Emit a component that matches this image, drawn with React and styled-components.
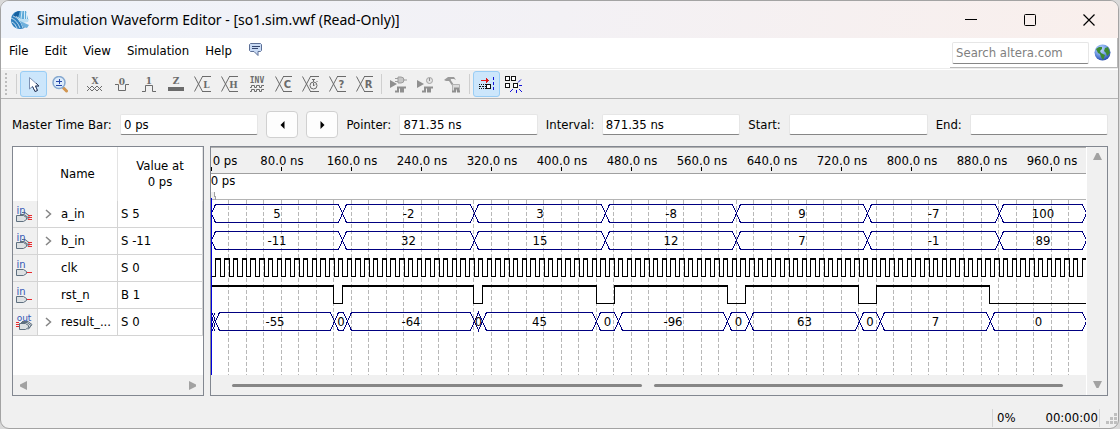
import React from 'react';
import styled, { createGlobalStyle, css } from 'styled-components';

const Global = createGlobalStyle`
  * { box-sizing: border-box; }
  body {
    margin: 0;
    background: #d9d9d9;
    color: #000;
    font: 13px/16px "DejaVu Sans Condensed", "Noto Sans", sans-serif;
  }
  button, input { font: inherit; color: inherit; }
`;

const Window = styled.div`
  display: flex;
  flex-direction: column;
  min-height: 100vh;
  margin-right: 1px;
  border: 1px solid #a3a3a3;
  border-radius: 9px;
  background: #f0f0f0;
  overflow: hidden;
`;

/* ---------- title bar ---------- */

const TitleBar = styled.header`
  display: flex;
  align-items: center;
  height: 37px;
  padding-left: 9px;
  background: linear-gradient(100deg, #eff3fa 0%, #f3f1f5 50%, #f9efec 100%);
`;

const Title = styled.h1`
  flex: 1;
  margin: 0 0 0 7px;
  font: 400 14px/20px "Noto Sans", "Open Sans", sans-serif;
  white-space: nowrap;
`;

const CaptionButton = styled.button`
  display: grid;
  place-items: center;
  width: 59px;
  height: 37px;
  padding: 0;
  border: 0;
  background: none;
`;

/* ---------- menu bar ---------- */

const MenuBar = styled.nav`
  display: flex;
  align-items: flex-start;
  height: 31px;
  border-bottom: 1px solid #ececec;
  background: #fff;
`;

const MenuItem = styled.button`
  height: 26px;
  padding: 0 8px;
  border: 0;
  background: none;
`;

const SearchBox = styled.form`
  display: flex;
  align-items: center;
  gap: 5px;
  height: 30px;
  margin-left: auto;
  padding: 0 6px 0 2px;
  border-right: 1px solid #b9b9b9;
  border-bottom: 1px solid #b9b9b9;
`;

const fieldLook = css`
  height: 21px;
  padding: 0 3px;
  border: 1px solid #e6e6e6;
  border-bottom-color: #868686;
  border-radius: 2px;
  background: #fff;
  outline: 0;
`;

const SearchInput = styled.input`
  ${fieldLook}
  width: 137px;
  height: 22px;
  &::placeholder { color: #7f7f7f; opacity: 1; }
`;

const IconButton = styled.button`
  display: grid;
  place-items: center;
  padding: 0;
  border: 0;
  background: none;
`;

/* ---------- tool bar ---------- */

const ToolBar = styled.div`
  display: flex;
  align-items: center;
  height: 30px;
  padding-left: 4px;
  border-top: 1px solid #fff;
  border-bottom: 1px solid #b4b4b4;
`;

const Grip = styled.span`
  width: 2px;
  height: 22px;
  margin-right: 6px;
  background: repeating-linear-gradient(#bdbdbd 0 2px, transparent 2px 4px);
`;

const Separator = styled.span`
  width: 1px;
  height: 20px;
  margin: 0 3px;
  background: #cfcfcf;
`;

const Tool = styled.button`
  display: grid;
  place-items: center;
  width: 27px;
  height: 26px;
  padding: 0;
  border: 1px solid ${p => (p.$on ? '#99cdf5' : 'transparent')};
  border-radius: 3px;
  background: ${p => (p.$on ? '#cce6fb' : 'none')};
`;

/* ---------- time bar ---------- */

const TimeBar = styled.div`
  display: flex;
  align-items: center;
  gap: 8px;
  padding: 12px 10px 8px 11px;
`;

const FieldLabel = styled.label`
  flex: none;
  width: ${p => p.$w}px;
  white-space: nowrap;
`;

const Field = styled.input`
  ${fieldLook}
  flex: 1 1 0;
  min-width: 0;
`;

const StepButton = styled.button`
  display: grid;
  place-items: center;
  width: 32px;
  height: 27px;
  padding: 0;
  border: 1px solid #d0d0d0;
  border-radius: 4px;
  background: #fdfdfd;
`;

/* ---------- panels ---------- */

const Panels = styled.main`
  display: flex;
  flex: 1;
  gap: 6px;
  padding: 0 10px 0 11px;
`;

const Panel = styled.section`
  display: flex;
  flex-direction: column;
  border: 1px solid #828790;
  background: #fff;
`;

const SignalPanel = styled(Panel)`
  flex: none;
  width: 192px;
`;

const ScopePanel = styled(Panel)`
  flex: 1;
  flex-direction: row;
  min-width: 0;
`;

const SignalTable = styled.table`
  width: 100%;
  border-collapse: separate;
  border-spacing: 0;
  table-layout: fixed;
`;

const HeadCell = styled.th`
  width: ${p => p.$w};
  height: 54px;
  padding: 0;
  border-right: 1px solid #e3e3e3;
  font-weight: 400;
`;

const Cell = styled.td`
  height: 27px;
  padding: 0 0 0 ${p => p.$pad || 3}px;
  border-right: 1px solid #d4d4d4;
  border-bottom: 1px solid #d4d4d4;
  background: ${p => (p.$icon ? '#f0f0f0' : '#fff')};
  white-space: nowrap;
  svg { display: block; }
`;

const NameLine = styled.span`
  display: flex;
  align-items: center;
  gap: 9px;
`;

const Chevron = styled.svg`
  width: 7px;
  height: 10px;
  flex: none;
`;

const TableScroll = styled.div`
  display: flex;
  align-items: center;
  justify-content: space-between;
  height: 20px;
  margin-top: auto;
  padding: 0 6px;
  background: #f0f0f0;
`;

const ScopeBody = styled.div`
  display: flex;
  flex: 1;
  flex-direction: column;
  min-width: 0;
`;

const Chart = styled.svg`
  display: block;
  flex: 1;
  width: 100%;
  min-height: 228px;
  text {
    font: 13px "DejaVu Sans Condensed", "Noto Sans", sans-serif;
    text-anchor: middle;
  }
`;

const ScopeScroll = styled.div`
  display: flex;
  flex: none;
  align-items: center;
  gap: 12px;
  height: 20px;
  padding: 0 23px 0 21px;
  background: #f0f0f0;
`;

const Track = styled.span`
  flex: 1;
  height: 3px;
  border-radius: 2px;
  background: #868686;
`;

const SideScroll = styled.div`
  display: flex;
  flex: none;
  flex-direction: column;
  align-items: center;
  justify-content: space-between;
  width: 21px;
  padding: 6px 0;
  border-left: 1px solid #fff;
  background: #f0f0f0;
`;

/* ---------- status bar ---------- */

const StatusBar = styled.footer`
  display: flex;
  align-items: center;
  justify-content: flex-end;
  height: 32px;
  padding: 12px 1px 0 0;
`;

const StatusText = styled.span`
  display: flex;
  align-items: center;
  justify-content: space-between;
  width: 108px;
  height: 18px;
  margin-right: 6px;
  padding: 0 1px 0 4px;
  border-left: 1px solid #d4d4d4;
  border-right: 1px solid #d4d4d4;
`;

/* ---------- icons ---------- */

const Icon = ({ w = 16, h = 16, children, ...rest }) => (
  <svg width={w} height={h} viewBox={`0 0 ${w} ${h}`} fill="none" aria-hidden="true" {...rest}>
    {children}
  </svg>
);

const INK = '#6b6b6b';

const Glyph = ({ x, y, size = 9, serif, weight = 700, children }) => (
  <text
    x={x}
    y={y}
    textAnchor="middle"
    fill={INK}
    fontSize={size}
    fontWeight={weight}
    fontFamily={serif ? '"DejaVu Serif", serif' : '"DejaVu Sans", sans-serif'}
  >
    {children}
  </text>
);

const ForkIcon = ({ glyph, serif, size = 10 }) => (
  <Icon w={17}>
    <path d="M0.500 0.500L8.500 15.500M0.500 15.500L8.500 0.500" stroke={INK} />
    <path d="M8 0.500H17M8 15.500H17" stroke={INK} />
    {glyph === 'clock' ? (
      <g stroke={INK}>
        <circle cx="11.500" cy="9.500" r="3.500" fill="#f0f0f0" />
        <path d="M11.500 7V10L13 8.500M11.500 3.500V6M10 3.500h3M14.500 5l1 1" />
      </g>
    ) : (
      <Glyph x={12.5} y={12} size={size} serif={serif}>{glyph}</Glyph>
    )}
  </Icon>
);

const AppLogo = () => (
  <Icon w={20} h={20}>
    <path d="M10 1C4 1 1 5 1 10s4 9 9 9c3 0 4-1 5-2L8 9l3-8z" fill="#2f7fbd" />
    <path d="M5 3Q7 1 10 1L8 8 3 7Z" fill="#155f9f" />
    <path d="M10 1h6l2 8-3 3H9L8 8z" fill="#5ea9d8" />
    <path d="M12 1l-1 8M14.500 1v8M16.500 3v6" stroke="#d5ebf8" />
    <path d="M1 8Q7 10 10 18M2 12Q5 13 7 18M3 6Q10 8 13 18M6 6.500Q12 9 15 16" stroke="#e4f2fb" strokeWidth="0.800" />
    <path d="M8 9h11l-1 3-6 1z" fill="#bcdff3" />
    <path d="M10 11l9 4-2 3-4-1z" fill="#6fb0dc" />
  </Icon>
);

const SpeechIcon = () => (
  <Icon w={15} h={15}>
    <path d="M2.500 1.500h10l1 1v6l-1 1h-2.500v4l-4-4h-3.500l-1-1v-6z" fill="#c9dbf5" stroke="#5c6f96" />
    <path d="M4 4.500h8M4 6.500h6" stroke="#34466f" />
  </Icon>
);

const GlobeIcon = () => (
  <Icon w={17} h={17}>
    <defs>
      <radialGradient id="sea" cx="0.4" cy="0.3" r="0.7">
        <stop offset="0" stopColor="#c2dafc" />
        <stop offset="0.5" stopColor="#7ba4ea" />
        <stop offset="1" stopColor="#2a4fb0" />
      </radialGradient>
    </defs>
    <circle cx="8.500" cy="8.500" r="8" fill="url(#sea)" />
    <path d="M2 5l3-2 3 0 0 2-2 2 1 2 2 1 2 1-1 3-1 2-2-3-1-3-2-1-1-2z" fill="#3c8a34" />
    <path d="M11 4l3-1 1 3 1 3-3 3-1-3-2-2z" fill="#3c8a34" />
  </Icon>
);

const PointerIcon = () => (
  <Icon w={12} h={17}>
    <path d="M1.500 1.500v11.500l3-2.500 2.500 5 2.500-1-2-4.500h3.500z" fill="#fff" stroke="#7d90b3" />
    <path d="M4.500 10.500l2.500 5 2.500-1-2-4.500h3.500L8 7" stroke="#2f3f5e" />
  </Icon>
);

const ZoomIcon = () => (
  <Icon w={17} h={17}>
    <path d="M11.500 12l3 3" stroke="#d2954f" strokeWidth="3" strokeLinecap="round" />
    <circle cx="7" cy="6.500" r="6" fill="#dcebfb" stroke="#86a9d0" strokeWidth="1.500" />
    <path d="M4 5.500h6M7.500 3v5M4 9.500h6" stroke="#2748a8" />
  </Icon>
);

const UnknownIcon = () => (
  <Icon h={18}>
    <Glyph x={8} y={9} serif>X</Glyph>
    <path d="M0 11l5 5M5 11l-5 5M5 11l5 5M10 11l-5 5M10 11l5 5M15 11l-5 5" stroke={INK} />
  </Icon>
);

const LowIcon = () => (
  <Icon h={18}>
    <Glyph x={8} y={10} serif>0</Glyph>
    <path d="M1 9.500h3.500v6h7v-6H15" stroke={INK} />
  </Icon>
);

const HighIcon = () => (
  <Icon h={18}>
    <Glyph x={8} y={9} serif>1</Glyph>
    <path d="M1 16.500h3.500v-6h7v6H15" stroke={INK} />
  </Icon>
);

const HighZIcon = () => (
  <Icon h={18}>
    <Glyph x={8} y={9} serif>Z</Glyph>
    <rect x="0" y="12" width="16" height="4" fill={INK} />
  </Icon>
);

const InvertIcon = () => (
  <Icon h={18}>
    <text x="8" y="8" textAnchor="middle" fill={INK} fontSize="8" fontWeight="700" fontFamily='"DejaVu Sans Mono", monospace'>INV</text>
    <path d="M1 12.500h1.500v-2h3v2h2v-2h3v2h2v-2h2.500M1 16.500h1.500v-2h3v2h2v-2h3v2h2v-2h2.500" stroke={INK} />
  </Icon>
);

const RunFunctionalIcon = () => (
  <Icon w={17} h={17}>
    <path d="M0 4l7 4-7 4z" fill="#8f8f8f" />
    <path d="M5 15.500h3v-4h3v4h2v-4h3" stroke="#8f8f8f" strokeWidth="2" />
    <path d="M8 1h3a3 3 0 0 1 0 6H8zM5 2.500h3M5 5.500h3M13 4h4" fill="#c6c6c6" stroke="#9d9d9d" />
  </Icon>
);

const RunTimingIcon = () => (
  <Icon w={17} h={17}>
    <path d="M0 4l7 4-7 4z" fill="#8f8f8f" />
    <path d="M5 15.500h3v-4h3v4h2v-4h3" stroke="#8f8f8f" strokeWidth="2" />
    <circle cx="12.500" cy="4.500" r="3" fill="#e2e2e2" stroke="#a3a3a3" />
    <path d="M12.500 2v3" stroke="#8f8f8f" />
  </Icon>
);

const TestBenchIcon = () => (
  <Icon w={17} h={17}>
    <path d="M0 4l4-3h6l2 3-2-1H7l-1 2H4L2 5z" fill="#9a9a9a" />
    <path d="M5.500 4l6 9" stroke="#9a9a9a" strokeWidth="2" />
    <path d="M8.500 15v-6.500h7v7" fill="#dcdcdc" stroke="#b3b3b3" />
    <path d="M8 15.500h3v-3h3v3h2" stroke="#8f8f8f" strokeWidth="2" />
  </Icon>
);

const SnapIcon = () => (
  <Icon w={16} h={16} shapeRendering="crispEdges">
    <path d="M2 4.500h8" stroke="#e01818" />
    <path d="M7.500 2v5M8.500 3v3" stroke="#e01818" />
    <path d="M0 8.500h7M0 12.500h7" stroke="#111" strokeDasharray="1 1" />
    <path d="M0 10.500h7" stroke="#111" strokeDasharray="2 1" />
    <rect x="7.500" y="8.500" width="4" height="4" fill="#fff" stroke="#111" />
    <path d="M14.500 1v14" stroke="#1212d8" strokeDasharray="3 2" />
  </Icon>
);

const GridIcon = () => (
  <Icon w={17} h={17}>
    <g stroke="#111" fill="#fff" shapeRendering="crispEdges">
      <rect x="0.500" y="0.500" width="4" height="4" />
      <rect x="6.500" y="0.500" width="4" height="4" />
      <rect x="0.500" y="7.500" width="4" height="4" />
      <rect x="8.500" y="7.500" width="4" height="4" />
    </g>
    <path d="M14 9.500h3M13 6.500l3-3M14 13l3 3M11.500 14v3M8 13l-3 3" stroke="#1212d8" />
  </Icon>
);

const WIRE = '#ea2a2e';
const EDGE = '#5f7080';

const PORT_SHAPES = {
  in: (
    <>
      <path d="M11 14.500h5" stroke={WIRE} />
      <path d="M0.500 11.500h7l3 2v2l-3 2h-7z" fill="#dde1e3" stroke={EDGE} />
    </>
  ),
  inBus: (
    <>
      <path d="M6 8.500h3l4 3v3" fill="#dde1e3" stroke={EDGE} />
      <path d="M4 10.500h4l4 3v2" fill="#dde1e3" stroke={EDGE} />
      <path d="M12 11.500h4M12 13.500h4M12 15.500h4" stroke={WIRE} />
      <path d="M0.500 11.500h7l3 2v2l-3 2h-7z" fill="#dde1e3" stroke={EDGE} />
    </>
  ),
  out: (
    <>
      <path d="M0 10.500h3M0 12.500h3M0 14.500h3" stroke={WIRE} />
      <path d="M6 9.500h6l4 3-3 4" fill="#dde1e3" stroke={EDGE} />
      <path d="M5 10.500h6l4 3-3 4" fill="#dde1e3" stroke={EDGE} />
      <path d="M3.500 11.500h6l3 2v2l-3 2h-6z" fill="#dde1e3" stroke={EDGE} />
    </>
  ),
};

const PortIcon = ({ kind }) => (
  <Icon w={17} h={20}>
    {PORT_SHAPES[kind]}
    <text
      x={kind === 'out' ? 8 : 5}
      y={kind === 'out' ? 9 : 10}
      textAnchor="middle"
      fill="#3457b5"
      fontSize={kind === 'out' ? 9 : 10}
      fontFamily='"DejaVu Sans", sans-serif'
    >
      {kind === 'out' ? 'out' : 'in'}
    </text>
  </Icon>
);

const Arrow = ({ dir }) => {
  const shapes = { left: 'M8 0v9L1 5.500v-2z', right: 'M0 0v9l7-3.500v-2z', up: 'M0 7h9L5.500 0h-2z', down: 'M0 0h9L5.500 7h-2z' };
  const tall = dir === 'left' || dir === 'right';
  return (
    <Icon w={tall ? 8 : 9} h={tall ? 9 : 8}>
      <path d={shapes[dir]} fill="#a2a2a2" />
    </Icon>
  );
};

const StepArrow = ({ back }) => (
  <Icon w={5} h={8}>
    <path d={back ? 'M4.500 0v8L0.500 4z' : 'M0.500 0v8l4-4z'} fill="#000" />
  </Icon>
);

/* ---------- data ---------- */

const SIGNALS = [
  { name: 'a_in', value: 'S 5', kind: 'inBus', group: true },
  { name: 'b_in', value: 'S -11', kind: 'inBus', group: true },
  { name: 'clk', value: 'S 0', kind: 'in' },
  { name: 'rst_n', value: 'B 1', kind: 'in' },
  { name: 'result_...', value: 'S 0', kind: 'out', group: true },
];

const END = 1000;
const PX_PER_NS = 0.875;
const at = ns => ns * PX_PER_NS;

const A_IN = [[0, '5'], [150, '-2'], [300, '3'], [450, '-8'], [600, '9'], [750, '-7'], [900, '100']];
const B_IN = [[0, '-11'], [150, '32'], [300, '15'], [450, '12'], [600, '7'], [750, '-1'], [900, '89']];
const RESULT = [
  [5, '-55'], [140, '0'], [155, '-64'], [300, '0'], [310, '45'], [440, '0'], [465, '-96'],
  [590, '0'], [615, '63'], [740, '0'], [765, '7'], [890, '0'],
];
const RESET_LOW = [[140, 150], [300, 310], [440, 460], [590, 610], [740, 760], [890, END]];

/* ---------- waveforms ---------- */

const Bus = ({ y, steps }) => (
  <g>
    {steps.map(([start, label], i) => {
      const end = i + 1 < steps.length ? steps[i + 1][0] : END;
      const a = Math.round(at(start)) + 0.5;
      const b = Math.round(at(end)) + 0.5;
      return (
        <g key={start}>
          <path
            d={`M${a + 4} ${y}H${b - 4}L${b} ${y + 9}L${b - 4} ${y + 18}H${a + 4}L${a} ${y + 9}Z`}
            fill="none"
            stroke="#000080"
            shapeRendering="crispEdges"
          />
          <text x={(a + b) / 2} y={y + 13.5}>{label}</text>
        </g>
      );
    })}
  </g>
);

const clockPath = y => {
  let d = `M0 ${y + 18}`;
  for (let t = 5; t < END; t += 10) {
    d += `H${Math.round(at(t)) + 0.5}V${y}H${Math.round(at(t + 5)) + 0.5}`;
    if (t + 5 < END) d += `V${y + 18}`;
  }
  return d;
};

const clockTops = y => {
  let d = '';
  for (let t = 5; t < END; t += 10) d += `M${Math.round(at(t))} ${y}H${Math.round(at(t + 5)) + 1}`;
  return d;
};

const resetPath = y => {
  let d = `M0 ${y}`;
  RESET_LOW.forEach(([down, up]) => {
    d += `H${Math.floor(at(down)) + 0.5}V${y + 18}H${Math.round(at(up)) + 0.5}`;
    if (up < END) d += `V${y}`;
  });
  return d;
};

const resetTops = y => {
  let d = `M0 ${y}`;
  RESET_LOW.forEach(([down, up]) => {
    d += `H${Math.floor(at(down)) + 1}`;
    if (up < END) d += `M${Math.round(at(up))} ${y}`;
  });
  return d;
};

const Waveforms = () => {
  const grid = Array.from({ length: 49 }, (_, i) => Math.floor(at((i + 1) * 20)) + 0.5);
  const ticks = Array.from({ length: 13 }, (_, i) => i * 80);
  return (
    <Chart role="img" aria-label="Waveforms">
      <rect width="100%" height="26" fill="#f0f0f0" />
      <g shapeRendering="crispEdges">
        <path d="M0 0.500H4000" stroke="#b0b0b0" />
        <path d="M0 26.500H4000" stroke="#a0a0a0" />
        <path d="M0 52.500H4000" stroke="#b4b4b4" />
        {grid.map(x => (
          <line key={x} x1={x} x2={x} y1="53" y2="100%" stroke="#b8b8b8" strokeDasharray="4 2" />
        ))}
        {ticks.map(t => (
          <path key={t} d={`M${at(t) + 0.5} 20V24`} stroke="#000" />
        ))}
        <rect x="0" y="45" width="4" height="7" fill="#f0f0f0" />
        <path d="M3.500 45v4h1v4" stroke="#a0a0a0" />
      </g>
      {ticks.map(t => (
        <text key={t} x={t ? at(t) + 1 : 14} y="18">{t ? `${t}.0 ns` : '0 ps'}</text>
      ))}
      <text x="12" y="38">0 ps</text>
      <Bus y={57.5} steps={A_IN} />
      <Bus y={84.5} steps={B_IN} />
      <g stroke="#000" fill="none" shapeRendering="crispEdges">
        <path d={clockPath(111.5)} />
        <path d={clockTops(112.5)} />
        <path d={resetPath(138.5)} />
        <path d={resetTops(139.5)} />
      </g>
      <Bus y={165.5} steps={RESULT} />
      <path d="M1 166l3 6-3 6 3 6M4 166l-3 6 3 6-3 6" stroke="#000080" fill="none" shapeRendering="crispEdges" />
      <line x1="0.5" x2="0.5" y1="51" y2="100%" stroke="#0000e0" shapeRendering="crispEdges" />
    </Chart>
  );
};

const LEVEL_FORKS = [
  { label: 'Weak low', glyph: 'L', serif: true },
  { label: 'Weak high', glyph: 'H', serif: true },
];

const VALUE_FORKS = [
  { label: 'Count value', glyph: 'C' },
  { label: 'Overwrite clock', glyph: 'clock' },
  { label: 'Arbitrary value', glyph: '?' },
  { label: 'Random value', glyph: 'R' },
];

export default function App() {
  return (
    <>
      <Global />
      <Window>
        <TitleBar>
          <AppLogo />
          <Title>Simulation Waveform Editor - [so1.sim.vwf (Read-Only)]</Title>
          <CaptionButton aria-label="Minimize">
            <Icon w={12} h={12}><path d="M0 5.500h12" stroke="#000" /></Icon>
          </CaptionButton>
          <CaptionButton aria-label="Maximize">
            <Icon w={12} h={12}><rect x="0.500" y="0.500" width="11" height="11" rx="1" stroke="#000" /></Icon>
          </CaptionButton>
          <CaptionButton aria-label="Close">
            <Icon w={12} h={12}><path d="M0.500 0.500l11 11M11.500 0.500l-11 11" stroke="#000" strokeWidth="1.200" /></Icon>
          </CaptionButton>
        </TitleBar>

        <MenuBar>
          <MenuItem>File</MenuItem>
          <MenuItem>Edit</MenuItem>
          <MenuItem>View</MenuItem>
          <MenuItem>Simulation</MenuItem>
          <MenuItem>Help</MenuItem>
          <MenuItem aria-label="Feedback"><SpeechIcon /></MenuItem>
          <SearchBox>
            <SearchInput aria-label="Search altera.com" placeholder="Search altera.com" />
            <IconButton type="button" aria-label="Search the web"><GlobeIcon /></IconButton>
          </SearchBox>
        </MenuBar>

        <ToolBar>
          <Grip />
          <Separator />
          <Tool $on aria-label="Selection"><PointerIcon /></Tool>
          <Tool aria-label="Zoom"><ZoomIcon /></Tool>
          <Separator />
          <Tool aria-label="Forcing unknown"><UnknownIcon /></Tool>
          <Tool aria-label="Forcing low"><LowIcon /></Tool>
          <Tool aria-label="Forcing high"><HighIcon /></Tool>
          <Tool aria-label="High impedance"><HighZIcon /></Tool>
          {LEVEL_FORKS.map(f => (
            <Tool key={f.label} aria-label={f.label}><ForkIcon {...f} size={9} /></Tool>
          ))}
          <Tool aria-label="Invert"><InvertIcon /></Tool>
          {VALUE_FORKS.map(f => (
            <Tool key={f.label} aria-label={f.label}><ForkIcon {...f} /></Tool>
          ))}
          <Separator />
          <Tool aria-label="Run functional simulation"><RunFunctionalIcon /></Tool>
          <Tool aria-label="Run timing simulation"><RunTimingIcon /></Tool>
          <Tool aria-label="Generate test bench"><TestBenchIcon /></Tool>
          <Separator />
          <Tool $on aria-label="Snap to transition"><SnapIcon /></Tool>
          <Tool aria-label="Snap to grid"><GridIcon /></Tool>
        </ToolBar>

        <TimeBar>
          <FieldLabel htmlFor="master" $w={100}>Master Time Bar:</FieldLabel>
          <Field id="master" defaultValue="0 ps" />
          <StepButton aria-label="Previous transition"><StepArrow back /></StepButton>
          <StepButton aria-label="Next transition"><StepArrow /></StepButton>
          <FieldLabel htmlFor="pointer" $w={45}>Pointer:</FieldLabel>
          <Field id="pointer" defaultValue="871.35 ns" />
          <FieldLabel htmlFor="interval" $w={48}>Interval:</FieldLabel>
          <Field id="interval" defaultValue="871.35 ns" />
          <FieldLabel htmlFor="start" $w={33}>Start:</FieldLabel>
          <Field id="start" />
          <FieldLabel htmlFor="end" $w={26}>End:</FieldLabel>
          <Field id="end" />
        </TimeBar>

        <Panels>
          <SignalPanel>
            <SignalTable>
              <thead>
                <tr>
                  <HeadCell $w="25px" aria-label="Type" />
                  <HeadCell $w="80px">Name</HeadCell>
                  <HeadCell $w="auto">Value at<br />0 ps</HeadCell>
                </tr>
              </thead>
              <tbody>
                {SIGNALS.map(s => (
                  <tr key={s.name}>
                    <Cell $icon><PortIcon kind={s.kind} /></Cell>
                    <Cell $pad={s.group ? 7 : 23}>
                      <NameLine>
                        {s.group && (
                          <Chevron viewBox="0 0 7 10" fill="none">
                            <path d="M1 1l4.500 4L1 9" stroke="#858585" strokeWidth="1.500" />
                          </Chevron>
                        )}
                        {s.name}
                      </NameLine>
                    </Cell>
                    <Cell>{s.value}</Cell>
                  </tr>
                ))}
              </tbody>
            </SignalTable>
            <TableScroll>
              <Arrow dir="left" />
              <Arrow dir="right" />
            </TableScroll>
          </SignalPanel>

          <ScopePanel>
            <ScopeBody>
              <Waveforms />
              <ScopeScroll>
                <Track />
                <Track />
              </ScopeScroll>
            </ScopeBody>
            <SideScroll>
              <Arrow dir="up" />
              <Arrow dir="down" />
            </SideScroll>
          </ScopePanel>
        </Panels>

        <StatusBar>
          <StatusText>
            <span>0%</span>
            <span>00:00:00</span>
          </StatusText>
          <Icon w={11} h={11}>
            <path d="M8 0h3v3H8zM4 4h3v3H4zM8 4h3v3H8zM0 8h3v3H0zM4 8h3v3H4zM8 8h3v3H8z" fill="#bfbfbf" />
          </Icon>
        </StatusBar>
      </Window>
    </>
  );
}
